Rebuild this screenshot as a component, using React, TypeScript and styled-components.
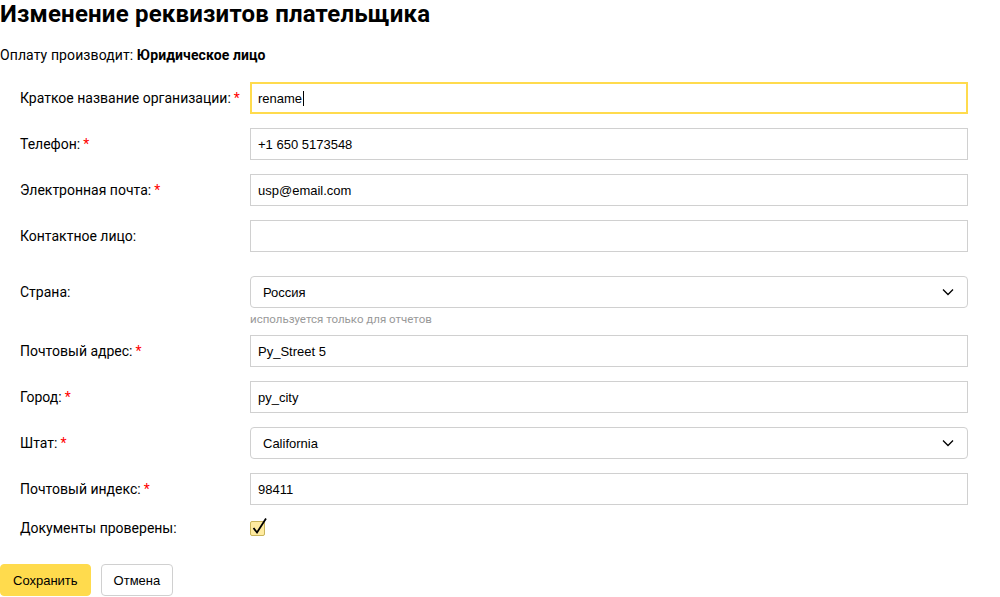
import React from "react";
import styled, { createGlobalStyle } from "styled-components";

const Global = createGlobalStyle`
  html, body { margin: 0; padding: 0; background: #fff; }
  body { font-family: Roboto, "Noto Sans", sans-serif; color: #000; }
  * { box-sizing: border-box; }
`;

const Page = styled.div`
  width: 1000px;
  padding: 0 32px 0 0;
`;

const Title = styled.h1`
  margin: 0;
  font-family: Roboto, sans-serif;
  font-weight: 700;
  font-size: 24px;
  letter-spacing: 0.2px;
  line-height: 28px;
`;

const Payer = styled.div`
  margin-top: 18px;
  font-size: 14px;
  line-height: 18px;
  letter-spacing: 0.1px;
  b { font-weight: 700; }
`;

const Form = styled.div`
  margin-top: 18px;
  padding-left: 20px;
  display: flex;
  flex-direction: column;
`;

const Row = styled.div<{ $gap?: number }>`
  display: grid;
  grid-template-columns: 230px 1fr;
  align-items: start;
  margin-bottom: ${(p) => p.$gap ?? 14}px;
`;

const Label = styled.div`
  font-size: 14px;
  line-height: 32px;
  height: 32px;
  color: #000;
`;

const Star = styled.span`
  color: #f00;
  margin-left: 3px;
`;

const Input = styled.div<{ $focus?: boolean }>`
  height: 32px;
  border: ${(p) => (p.$focus ? "2px solid #ffdb4d" : "1px solid #d0d0d0")};
  padding: 0 ${(p) => (p.$focus ? 6 : 7)}px;
  display: flex;
  align-items: center;
  font-family: "Liberation Sans", Arial, sans-serif;
  font-size: 13px;
  background: #fff;
`;

const Caret = styled.span`
  display: inline-block;
  width: 1px;
  height: 15px;
  background: #000;
  margin-left: 1px;
`;

const Select = styled.div`
  height: 32px;
  border: 1px solid #d0d0d0;
  border-radius: 4px;
  padding: 0 13px 0 12px;
  display: flex;
  align-items: center;
  justify-content: space-between;
  font-family: "Liberation Sans", Arial, sans-serif;
  font-size: 13px;
`;

const Hint = styled.div`
  font-size: 11.5px;
  color: #999;
  margin-top: 4px;
  line-height: 14px;
`;

const CheckLabel = styled(Label)`
  height: 26px;
  line-height: 26px;
`;

const CheckBox = styled.div`
  position: relative;
  width: 15px;
  height: 15px;
  margin-top: 6px;
  background: #ffeba0;
  border: 1px solid #c9b45a;
  border-radius: 2px;
  svg { position: absolute; left: 0; top: -5px; }
`;

const Buttons = styled.div`
  display: flex;
  gap: 10px;
  margin-top: 23px;
`;

const Button = styled.button<{ $primary?: boolean }>`
  height: 32px;
  padding: 0 12px;
  font-family: "Liberation Sans", Arial, sans-serif;
  font-size: 13px;
  border-radius: 4px;
  border: ${(p) => (p.$primary ? "1px solid #ffdb4d" : "1px solid #d0d0d0")};
  background: ${(p) => (p.$primary ? "#ffdb4d" : "#fff")};
  color: #000;
`;

const Chevron = () => (
  <svg width="12" height="8" viewBox="0 0 12 8">
    <path d="M1 1.5 L6 6.5 L11 1.5" fill="none" stroke="#000" strokeWidth="1.3" />
  </svg>
);

type F = { label: string; req?: boolean; value: string };

const TextRow = ({ label, req, value, focus, gap }: F & { focus?: boolean; gap?: number }) => (
  <Row $gap={gap}>
    <Label>
      {label}
      {req && <Star>*</Star>}
    </Label>
    <Input $focus={focus}>
      {value}
      {focus && <Caret />}
    </Input>
  </Row>
);

export default function App() {
  return (
    <Page>
      <Global />
      <Title>Изменение реквизитов плательщика</Title>
      <Payer>
        Оплату производит: <b>Юридическое лицо</b>
      </Payer>
      <Form>
        <TextRow label="Краткое название организации:" req value="rename" focus />
        <TextRow label="Телефон:" req value="+1 650 5173548" />
        <TextRow label="Электронная почта:" req value="usp@email.com" />
        <Row $gap={24}>
          <Label>Контактное лицо:</Label>
          <Input />
        </Row>
        <Row $gap={9}>
          <Label>Страна:</Label>
          <div>
            <Select>
              Россия
              <Chevron />
            </Select>
            <Hint>используется только для отчетов</Hint>
          </div>
        </Row>
        <TextRow label="Почтовый адрес:" req value="Py_Street 5" />
        <TextRow label="Город:" req value="py_city" />
        <Row>
          <Label>
            Штат:<Star>*</Star>
          </Label>
          <Select>
            California
            <Chevron />
          </Select>
        </Row>
        <TextRow label="Почтовый индекс:" req value="98411" gap={10} />
        <Row $gap={0}>
          <CheckLabel>Документы проверены:</CheckLabel>
          <CheckBox>
            <svg width="18" height="20" viewBox="0 0 18 20">
              <path d="M2.5 11 L6 15.5 L15 1.5" fill="none" stroke="#000" strokeWidth="1.8" />
            </svg>
          </CheckBox>
        </Row>
      </Form>
      <Buttons>
        <Button $primary>Сохранить</Button>
        <Button>Отмена</Button>
      </Buttons>
    </Page>
  );
}
